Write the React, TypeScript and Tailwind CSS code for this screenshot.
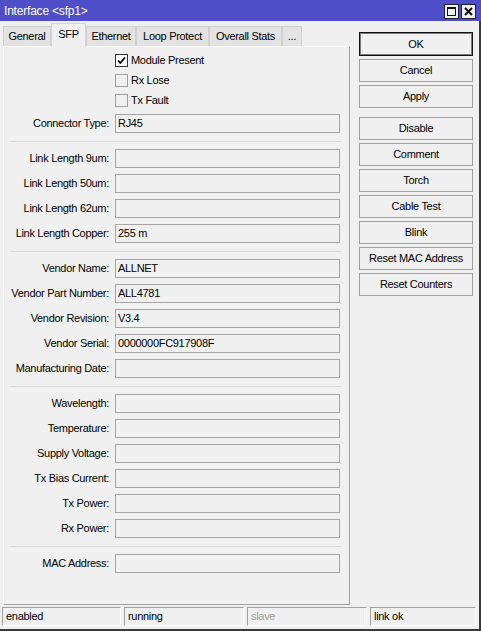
import React from "react";

const font = { fontFamily: '"Liberation Sans", Arial, sans-serif' };

const Field = ({ label, value }: { label: string; value?: string }) => (
    <div className="flex items-center h-[19px]">
        <div className="w-[106px] whitespace-nowrap flex justify-end pr-[1px]">{label}</div>
        <div className="ml-[5px] w-[225px] h-[19px] border border-[#a5a5a5] bg-[#f0f0f0] pl-[2px] flex items-center whitespace-nowrap">
            {value}
        </div>
    </div>
);

const Sep = () => <div className="ml-[6px] mr-[8px] mt-[8px] mb-[7px] h-px bg-[#d9d9d9]" />;

const Check = ({ label, checked }: { label: string; checked?: boolean }) => (
    <div className="flex items-center h-[20px]">
        <div className="w-[111px]" />
        <div
            className={
                "w-[13px] h-[13px] border bg-[#f0f0f0] flex items-center justify-center " +
                (checked ? "border-[#333333] bg-white" : "border-[#a0a0a0]")
            }
        >
            {checked && (
                <svg width="11" height="11" viewBox="0 0 11 11">
                    <polyline points="2,5.5 4.3,8 9,2.5" fill="none" stroke="#000" strokeWidth="1.8" />
                </svg>
            )}
        </div>
        <span className="ml-[3px]">{label}</span>
    </div>
);

const Btn = ({ label, def, className = "" }: { label: string; def?: boolean; className?: string }) => (
    <div
        className={
            "w-[114px] flex items-center justify-center bg-[#f0f0f0] border " +
            (def ? "h-[24px] border-[#111111] shadow-[inset_0_0_0_1px_#7a7a7a]" : "h-[23px] border-[#a0a0a0]") +
            " " +
            className
        }
    >
        {label}
    </div>
);

const Tab = ({ label, w, active }: { label: string; w: string; active?: boolean }) => (
    <div
        className={
            w +
            " flex items-center justify-center border border-b-0 whitespace-nowrap " +
            (active
                ? "h-[24px] -mb-px relative z-10 bg-[#f0f0f0] border-[#d4d4d4] pb-[3px]"
                : "h-[20px] bg-[#e3e3e3] border-[#d0d0d0]")
        }
    >
        {label}
    </div>
);

const Status = ({ text, w, muted }: { text: string; w: string; muted?: boolean }) => (
    <div
        className={
            w +
            " h-[19px] border border-t-[#a0a0a0] border-l-[#a0a0a0] border-r-white border-b-white pl-[3px] flex items-center " +
            (muted ? "text-[#a0a0a0]" : "")
        }
    >
        {text}
    </div>
);

export default function App() {
    return (
        <div className="w-[481px] h-[631px] flex flex-col text-[11px] tracking-[-0.3px] text-black" style={font}>
            <div className="h-[21px] bg-[#4d4ec8] flex items-center justify-between pl-[4px] pr-[5px] text-white text-[12px] tracking-[-0.2px]">
                <span>Interface &lt;sfp1&gt;</span>
                <div className="flex gap-[2px] pt-[1px]">
                    <div className="w-[15px] h-[15px] bg-[#f0f0f0] border border-[#222] flex items-center justify-center">
                        <div className="w-[9px] h-[9px] border border-t-2 border-[#111]" />
                    </div>
                    <div className="w-[15px] h-[15px] bg-[#f0f0f0] border border-[#222] flex items-center justify-center">
                        <svg width="9" height="9" viewBox="0 0 9 9">
                            <path d="M1 1 L8 8 M8 1 L1 8" stroke="#111" strokeWidth="2" />
                        </svg>
                    </div>
                </div>
            </div>
            <div className="flex-1 flex flex-col bg-[#f0f0f0] border-r-2 border-b-2 border-[#3a3a3a]">
                <div className="flex flex-1">
                    <div className="pl-[3px] flex flex-col">
                        <div className="h-[25px] flex items-end">
                            <Tab label="General" w="w-[48px]" />
                            <Tab label="SFP" w="w-[35px]" active />
                            <Tab label="Ethernet" w="w-[50px]" />
                            <Tab label="Loop Protect" w="w-[73px]" />
                            <Tab label="Overall Stats" w="w-[73px]" />
                            <Tab label="..." w="w-[20px]" />
                        </div>
                        <div className="w-[347px] h-[559px] border border-t-[#fafafa] border-l-[#fafafa] border-r-[#a0a0a0] border-b-[#a0a0a0] pt-[3px]">
                            <Check label="Module Present" checked />
                            <Check label="Rx Lose" />
                            <Check label="Tx Fault" />
                            <div className="mt-[4px]">
                                <Field label="Connector Type:" value="RJ45" />
                            </div>
                            <Sep />
                            <div className="flex flex-col gap-[6px]">
                                <Field label="Link Length 9um:" />
                                <Field label="Link Length 50um:" />
                                <Field label="Link Length 62um:" />
                                <Field label="Link Length Copper:" value="255 m" />
                            </div>
                            <Sep />
                            <div className="flex flex-col gap-[6px]">
                                <Field label="Vendor Name:" value="ALLNET" />
                                <Field label="Vendor Part Number:" value="ALL4781" />
                                <Field label="Vendor Revision:" value="V3.4" />
                                <Field label="Vendor Serial:" value="0000000FC917908F" />
                                <Field label="Manufacturing Date:" />
                            </div>
                            <Sep />
                            <div className="flex flex-col gap-[6px]">
                                <Field label="Wavelength:" />
                                <Field label="Temperature:" />
                                <Field label="Supply Voltage:" />
                                <Field label="Tx Bias Current:" />
                                <Field label="Tx Power:" />
                                <Field label="Rx Power:" />
                            </div>
                            <Sep />
                            <Field label="MAC Address:" />
                        </div>
                    </div>
                    <div className="ml-[9px] pt-[11px] flex flex-col gap-[3px]">
                        <Btn label="OK" def />
                        <Btn label="Cancel" />
                        <Btn label="Apply" />
                        <Btn label="Disable" className="mt-[6px]" />
                        <Btn label="Comment" />
                        <Btn label="Torch" />
                        <Btn label="Cable Test" />
                        <Btn label="Blink" />
                        <Btn label="Reset MAC Address" />
                        <Btn label="Reset Counters" />
                    </div>
                </div>
                <div className="h-[24px] flex gap-[3px] pl-[2px] pt-[2px]">
                    <Status text="enabled" w="w-[119px]" />
                    <Status text="running" w="w-[120px]" />
                    <Status text="slave" w="w-[120px]" muted />
                    <Status text="link ok" w="w-[106px]" />
                </div>
            </div>
        </div>
    );
}
